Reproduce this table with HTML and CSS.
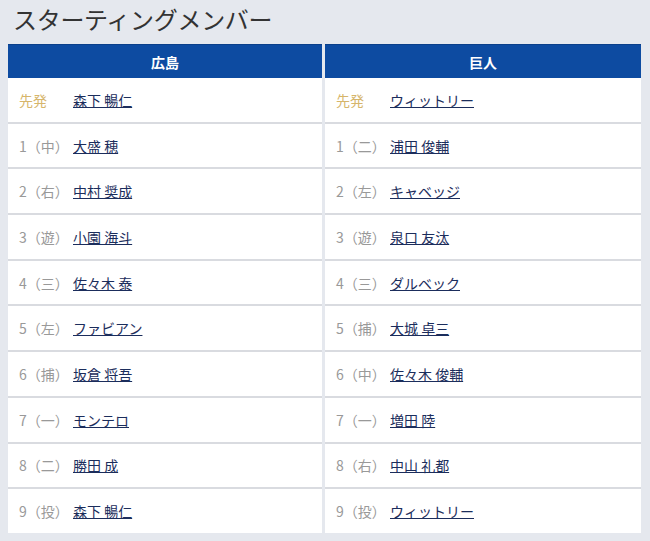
FILE: index.html
```html
<!DOCTYPE html>
<html lang="ja">
<head>
<meta charset="utf-8">
<link rel="stylesheet" href="styles.css">
</head>
<body>
<h2 class="title">スターティングメンバー</h2>
<div class="lineup">
  <div class="team">
    <div class="team-head">広島</div>
    <div class="row"><span class="pos starter">先発</span><a class="name" href="#">森下 暢仁</a></div>
    <div class="row"><span class="pos">1（中）</span><a class="name" href="#">大盛 穂</a></div>
    <div class="row"><span class="pos">2（右）</span><a class="name" href="#">中村 奨成</a></div>
    <div class="row"><span class="pos">3（遊）</span><a class="name" href="#">小園 海斗</a></div>
    <div class="row"><span class="pos">4（三）</span><a class="name" href="#">佐々木 泰</a></div>
    <div class="row"><span class="pos">5（左）</span><a class="name" href="#">ファビアン</a></div>
    <div class="row"><span class="pos">6（捕）</span><a class="name" href="#">坂倉 将吾</a></div>
    <div class="row"><span class="pos">7（一）</span><a class="name" href="#">モンテロ</a></div>
    <div class="row"><span class="pos">8（二）</span><a class="name" href="#">勝田 成</a></div>
    <div class="row"><span class="pos">9（投）</span><a class="name" href="#">森下 暢仁</a></div>
  </div>
  <div class="team">
    <div class="team-head">巨人</div>
    <div class="row"><span class="pos starter">先発</span><a class="name" href="#">ウィットリー</a></div>
    <div class="row"><span class="pos">1（二）</span><a class="name" href="#">浦田 俊輔</a></div>
    <div class="row"><span class="pos">2（左）</span><a class="name" href="#">キャベッジ</a></div>
    <div class="row"><span class="pos">3（遊）</span><a class="name" href="#">泉口 友汰</a></div>
    <div class="row"><span class="pos">4（三）</span><a class="name" href="#">ダルベック</a></div>
    <div class="row"><span class="pos">5（捕）</span><a class="name" href="#">大城 卓三</a></div>
    <div class="row"><span class="pos">6（中）</span><a class="name" href="#">佐々木 俊輔</a></div>
    <div class="row"><span class="pos">7（一）</span><a class="name" href="#">増田 陸</a></div>
    <div class="row"><span class="pos">8（右）</span><a class="name" href="#">中山 礼都</a></div>
    <div class="row"><span class="pos">9（投）</span><a class="name" href="#">ウィットリー</a></div>
  </div>
</div>
</body>
</html>
```
FILE: styles.css
```css
html, body {
  margin: 0;
  padding: 0;
  background: #e5e8ee;
  font-family: "Noto Sans CJK JP", "Noto Sans", sans-serif;
}
.title {
  margin: 0 0 6px 0;
  padding-left: 13px;
  height: 38px;
  font-size: 24px;
  line-height: 38px;
  font-weight: 400;
  color: #333;
  letter-spacing: -0.3px;
}
.lineup {
  display: grid;
  grid-template-columns: 314px 316px;
  column-gap: 3px;
  padding-left: 8px;
}
.team {
  display: flex;
  flex-direction: column;
  gap: 2px;
  background: #d9dbe0;
}
.team-head {
  height: 34px;
  background: #0d4ba1;
  color: #fff;
  font-weight: 700;
  font-size: 14px;
  display: flex;
  align-items: center;
  justify-content: center;
  margin-bottom: -2px;
  border-top: 1px solid #0a3f8a;
  box-sizing: border-box;
}
.row {
  height: 43.7px;
  background: #fff;
  display: flex;
  align-items: center;
  padding-left: 11px;
  font-size: 14px;
}
.pos {
  width: 54px;
  color: #999;
  flex: none;
}
.pos.starter {
  color: #d6b56b;
}
.name {
  color: #1b2d5c;
  text-decoration: underline;
}
```
